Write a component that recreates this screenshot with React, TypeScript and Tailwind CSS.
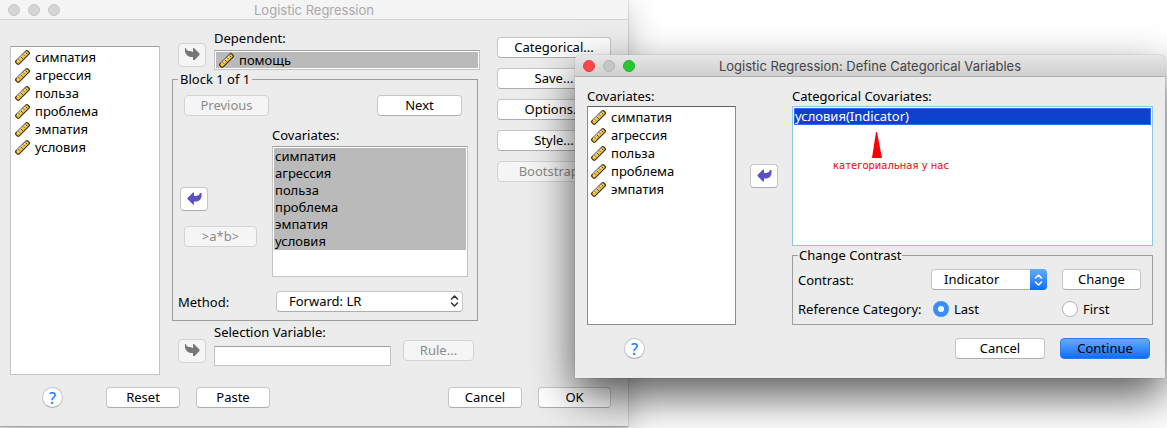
import { useId, useState } from 'react';
import type { ReactNode } from 'react';
import clsx from 'clsx';

const textFont = "font-['Noto_Sans',sans-serif] text-[13px] leading-[16px]";

function RulerIcon() {
  return (
    <svg width="15" height="15" viewBox="0 0 15 15" className="shrink-0" aria-hidden="true">
      <path d="M.7 11.200L11.200.7h1.300l1.800 1.800v1.300L3.800 14.300H2.700L.7 12.300z" fill="#fdc525" stroke="#1c1a12" strokeWidth="1.100" />
      <path d="M2 10.800L11.300 1.700" stroke="#ddd8c0" strokeWidth="1.200" />
      <path d="M3.700 9.300l1.200 1.200M6 7l1.800 1.800M8.300 4.700l1.200 1.200M10.500 2.500l1.600 1.600" stroke="#4a3c10" strokeWidth=".9" />
    </svg>
  );
}

function ArrowRight() {
  return (
    <svg width="15" height="12" viewBox="0 0 15 12" aria-hidden="true">
      <path d="M0 0h1v1l2 2h2l3 1V0h1l5.500 5.500V7L9.500 12H8V9H5L3 8 1 6 0 4z" fill="#767676" />
    </svg>
  );
}

function ArrowLeft() {
  return (
    <svg width="15" height="13" viewBox="0 0 15 13" aria-hidden="true">
      <path d="M.5 6L6 .5h1V4h2l3-1 1-2h1.500v4L13 8l-3 1.500H7v3H6L.5 7z" fill="#5a50c8" />
    </svg>
  );
}

function Chevrons({ className }: { className?: string }) {
  return (
    <svg width="9" height="12" viewBox="0 0 9 12" fill="none" stroke="currentColor" strokeWidth="1.500" className={className} aria-hidden="true">
      <path d="M1.500 4l3-3 3 3M1.500 8l3 3 3-3" strokeLinecap="round" strokeLinejoin="round" />
    </svg>
  );
}

type ButtonProps = { children: ReactNode; className?: string; disabled?: boolean; primary?: boolean; label?: string };

function Button({ children, className, disabled, primary, label }: ButtonProps) {
  return (
    <button
      type="button"
      disabled={disabled}
      aria-label={label}
      className={clsx(
        'flex shrink-0 items-center justify-center rounded-[4px] border pb-[2px] whitespace-nowrap',
        textFont,
        primary
          ? 'border-[#2a7df0] bg-linear-to-b from-[#62abfa] to-[#0d6bff] text-black'
          : disabled
            ? 'border-[#d3d3d3] bg-[#f5f5f5] text-[#8b8b8b]'
            : 'border-[#c6c6c6] border-b-[#adadad] bg-white text-black',
        className,
      )}
    >
      {children}
    </button>
  );
}

function HelpButton() {
  return (
    <button
      type="button"
      aria-label="Help"
      className="flex size-[21px] items-center justify-center rounded-full border border-[#c4c4c4] border-b-[#a8a8a8] bg-white font-['Noto_Sans',sans-serif] text-[16px] leading-[16px] font-medium text-[#1a7cff]"
    >
      ?
    </button>
  );
}

function VariableList({ items, label, className }: { items: string[]; label: string; className?: string }) {
  return (
    <ul role="listbox" aria-label={label} className={clsx('border bg-white pt-[1px]', className)}>
      {items.map((item) => (
        <li key={item} role="option" aria-selected={false} className="flex h-[18px] items-center gap-[5px]">
          <RulerIcon />
          <span>{item}</span>
        </li>
      ))}
    </ul>
  );
}

function PopUp({ label, options, blue, className }: { label?: string; options: string[]; blue?: boolean; className?: string }) {
  const id = useId();
  return (
    <>
      <label htmlFor={id}>{label}</label>
      <div className={clsx('relative', className)}>
        <select
          id={id}
          className={clsx('block h-[21px] w-full appearance-none rounded-[4px] border border-[#c6c6c6] border-b-[#adadad] bg-white pr-[20px] pb-[2px] pl-[12px]', textFont)}
        >
          {options.map((o) => (
            <option key={o}>{o}</option>
          ))}
        </select>
        {blue ? (
          <span className="pointer-events-none absolute inset-y-0 right-0 flex w-[17px] items-center justify-center rounded-r-[4px] bg-linear-to-b from-[#62abfa] to-[#0d6bff] text-white">
            <Chevrons />
          </span>
        ) : (
          <Chevrons className="pointer-events-none absolute top-[4px] right-[4px] text-[#333]" />
        )}
      </div>
    </>
  );
}

function Radio({ label, checked, onChange }: { label: string; checked: boolean; onChange: () => void }) {
  return (
    <label className="flex items-center gap-[5px]">
      <input
        type="radio"
        name="reference-category"
        checked={checked}
        onChange={onChange}
        className="size-[16px] appearance-none rounded-full border border-[#b4b4b4] bg-white checked:border-[5px] checked:border-[#388ffb]"
      />
      {label}
    </label>
  );
}

const variables = ['симпатия', 'агрессия', 'польза', 'проблема', 'эмпатия', 'условия'];

function RegressionWindow() {
  const selectionId = useId();
  return (
    <section
      aria-label="Logistic Regression"
      className="w-fit border-b border-[#a6a6a6] bg-[#ececec] shadow-[0_0_1px_rgba(0,0,0,0.5),0_8px_30px_rgba(0,0,0,0.25)]"
    >
      <header className="relative flex h-[20px] items-center justify-center border-b border-[#d0d0d0] bg-[#f4f4f4] font-['Inter',sans-serif] text-[13px] leading-[16px] text-[#a9a9a9]">
        <div className="absolute left-[8px] flex gap-[8px]">
          {['Close', 'Minimize', 'Zoom'].map((n) => (
            <button key={n} type="button" aria-label={n} className="size-[12px] rounded-full border border-[#c6c6c6] bg-[#d5d5d5]" />
          ))}
        </div>
        <h1>Logistic Regression</h1>
      </header>

      <div className="flex pr-[17px] pl-[10px]">
        <div className="flex w-[150px] flex-col pt-[26px]">
          <VariableList items={variables} label="Variables" className="flex-1 border-[#c4c4c4] border-t-[#a0a0a0] pl-[4px]" />
        </div>

        <div className="ml-[12px] w-[306px] pt-[10px] pb-[9px]">
          <div className="flex items-end gap-[8px] pl-[6px]">
            <Button disabled label="Move to dependent" className="mb-[3px] h-[24px] w-[28px]">
              <ArrowRight />
            </Button>
            <div className="flex-1">
              <p>Dependent:</p>
              <div className="mt-[4px] -mr-[2px] flex h-[20px] items-center gap-[5px] border border-[#c4c4c4] border-t-[#a0a0a0] bg-[#bababa] pl-[4px] outline-1 -outline-offset-2 outline-white">
                <RulerIcon />
                <span>помощь</span>
              </div>
            </div>
          </div>

          <fieldset className="mt-[1px] border border-[#9d9d9d] px-[5px] pb-[8px]">
            <legend className="px-[2px]">Block 1 of 1</legend>
            <div className="flex justify-between pt-[8px] pr-[10px] pl-[6px]">
              <Button disabled className="h-[21px] w-[85px]">Previous</Button>
              <Button className="h-[21px] w-[85px]">Next</Button>
            </div>
            <div className="flex pt-[11px]">
              <div className="flex w-[94px] flex-col items-start gap-[15px] pt-[60px]">
                <Button label="Remove covariate" className="ml-[2px] h-[24px] w-[28px]">
                  <ArrowLeft />
                </Button>
                <Button disabled className="ml-[6px] h-[21px] w-[73px]">&gt;a*b&gt;</Button>
              </div>
              <div className="flex-1 pr-[4px]">
                <p>Covariates:</p>
                <ul role="listbox" aria-label="Covariates" className="mt-[3px] h-[131px] border border-[#c4c4c4] border-t-[#a0a0a0] bg-white p-px">
                  {variables.map((v) => (
                    <li key={v} role="option" aria-selected className="h-[17px] bg-[#bababa] pl-px">
                      {v}
                    </li>
                  ))}
                </ul>
              </div>
            </div>
            <div className="flex items-center justify-between pt-[14px] pr-[9px]">
              <PopUp label="Method:" options={['Forward: LR', 'Enter', 'Backward: LR']} className="w-[187px]" />
            </div>
          </fieldset>

          <div className="flex items-end gap-[8px] pt-[3px] pl-[6px]">
            <Button disabled label="Move to selection variable" className="mb-[3px] h-[24px] w-[28px]">
              <ArrowRight />
            </Button>
            <div className="w-[177px]">
              <label htmlFor={selectionId} className="block">Selection Variable:</label>
              <input
                id={selectionId}
                type="text"
                className="mt-[6px] block h-[20px] w-full border border-[#c4c4c4] border-t-[#a0a0a0] bg-white px-[4px]"
              />
            </div>
            <Button disabled className="mb-[5px] ml-[4px] h-[21px] w-[71px]">Rule...</Button>
          </div>
        </div>

        <div className="ml-[19px] flex w-[114px] flex-col gap-[10px] pt-[17px]">
          <Button className="h-[21px]">Categorical...</Button>
          <Button className="h-[21px]">Save...</Button>
          <Button className="h-[21px]">Options...</Button>
          <Button className="h-[21px]">Style...</Button>
          <Button disabled className="h-[21px]">Bootstrap...</Button>
        </div>
      </div>

      <footer className="flex items-center pt-[12px] pr-[17px] pb-[18px] pl-[42px]">
        <HelpButton />
        <Button className="ml-[43px] h-[21px] w-[74px]">Reset</Button>
        <Button className="ml-[16px] h-[21px] w-[74px]">Paste</Button>
        <Button className="mr-[16px] ml-auto h-[21px] w-[74px]">Cancel</Button>
        <Button className="h-[21px] w-[73px]">OK</Button>
      </footer>
    </section>
  );
}

function CategoricalDialog() {
  const [reference, setReference] = useState('Last');
  return (
    <section
      role="dialog"
      aria-label="Define Categorical Variables"
      className="absolute top-[55px] right-[2px] left-[575px] min-w-[560px] rounded-t-[5px] bg-[#ececec] shadow-[0_0_1px_rgba(0,0,0,0.6),0_18px_44px_rgba(0,0,0,0.65)]"
    >
      <header className="relative flex h-[22px] items-center justify-center rounded-t-[5px] border-b border-[#b0b0b0] bg-linear-to-b from-[#e6e6e6] to-[#cfcfcf] font-['Inter',sans-serif] text-[13px] leading-[16px] text-[#444]">
        <div className="absolute left-[8px] flex gap-[8px]">
          <button type="button" aria-label="Close" className="size-[12px] rounded-full border border-[#e83c3c] bg-[#fc4648]" />
          <button type="button" aria-label="Minimize" className="size-[12px] rounded-full border border-[#b4b4b4] bg-[#c6c6c6]" />
          <button type="button" aria-label="Zoom" className="size-[12px] rounded-full border border-[#22b22c] bg-[#28c732]" />
        </div>
        <h2>Logistic Regression: Define Categorical Variables</h2>
      </header>

      <div className="flex pt-[11px] pr-[12px] pl-[12px]">
        <div className="flex w-[149px] flex-col">
          <p>Covariates:</p>
          <VariableList items={variables.slice(0, 5)} label="Available covariates" className="mt-[2px] flex-1 border-[#8c8c8c] border-t-[#606060] pl-[3px]" />
        </div>
        <div className="px-[14px] pt-[76px]">
          <Button label="Move covariate" className="h-[24px] w-[28px]">
            <ArrowLeft />
          </Button>
        </div>
        <div className="flex-1">
          <p>Categorical Covariates:</p>
          <div className="mt-[2px] h-[140px] border border-[#8fc6dd] bg-white p-px">
            <ul role="listbox" aria-label="Categorical covariates">
              <li role="option" aria-selected className="h-[17px] border border-[#2c6ff0] bg-[#0f41cc] leading-[15px] text-white">
                условия(Indicator)
              </li>
            </ul>
            <figure className="ml-[39px] flex w-fit flex-col pt-[7px]">
              <svg width="10" height="26" viewBox="0 0 10 26" className="ml-[39px]" aria-hidden="true">
                <path d="M4 0h1l5 26H0z" fill="#fb0007" />
              </svg>
              <figcaption className="font-['DejaVu_Sans',sans-serif] text-[10px] leading-[15px] text-[#fb0007]">
                категориальная у нас
              </figcaption>
            </figure>
          </div>
          <fieldset className="mt-[1px] border border-[#9d9d9d] px-[5px] pb-[7px]">
            <legend className="px-[1px]">Change Contrast</legend>
            <div className="flex items-center pt-[6px] pr-[6px]">
              <div className="flex flex-1 items-center justify-between pr-[15px]">
                <PopUp label="Contrast:" options={['Indicator', 'Simple', 'Difference']} blue className="w-[116px]" />
              </div>
              <Button className="h-[21px] w-[79px]">Change</Button>
            </div>
            <div role="radiogroup" aria-label="Reference Category" className="flex items-center pt-[11px] pr-[6px]">
              <span className="flex-1">Reference Category:</span>
              <div className="w-[129px]">
                <Radio label="Last" checked={reference === 'Last'} onChange={() => setReference('Last')} />
              </div>
              <div className="w-[79px]">
                <Radio label="First" checked={reference === 'First'} onChange={() => setReference('First')} />
              </div>
            </div>
          </fieldset>
        </div>
      </div>

      <footer className="flex items-center pt-[13px] pr-[15px] pb-[19px] pl-[49px]">
        <HelpButton />
        <Button className="mr-[15px] ml-auto h-[21px] w-[90px]">Cancel</Button>
        <Button primary className="h-[21px] w-[90px]">Continue</Button>
      </footer>
    </section>
  );
}

export default function App() {
  return (
    <main className={clsx('relative min-h-screen overflow-hidden bg-white text-black', textFont)}>
      <RegressionWindow />
      <CategoricalDialog />
    </main>
  );
}
